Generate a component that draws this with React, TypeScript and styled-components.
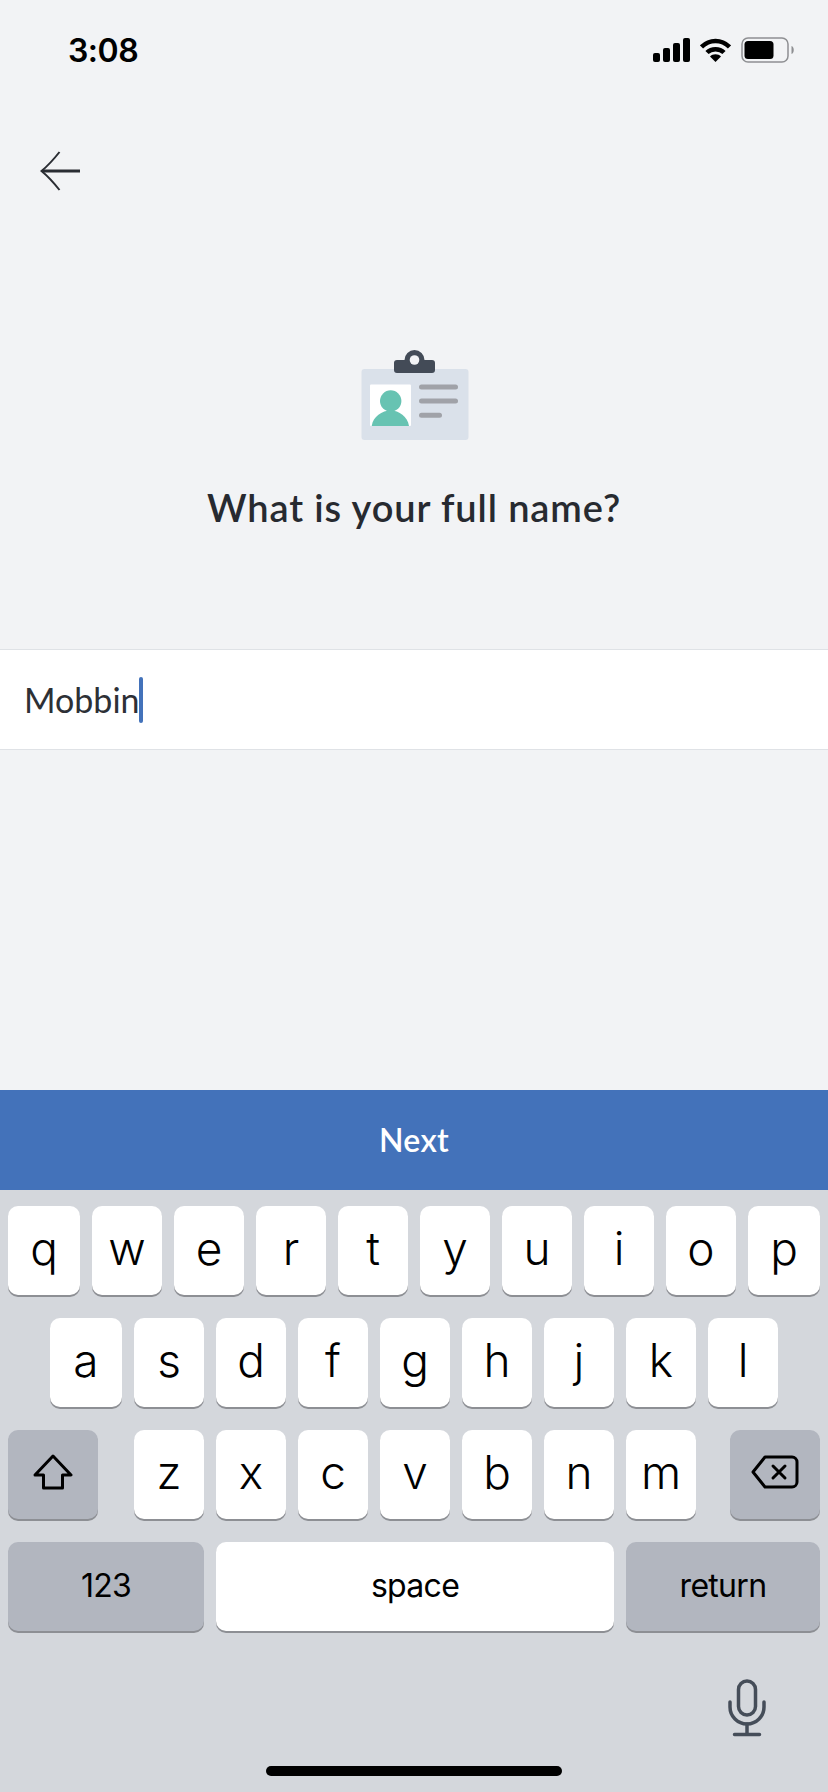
import * as React from 'react';
import styled, { createGlobalStyle } from 'styled-components';

const GlobalStyle = createGlobalStyle`
    html, body {
        margin: 0;
        padding: 0;
        background: #f2f3f5;
    }
`;

const Screen = styled.div`
    width: 828px;
    height: 1792px;
    display: flex;
    flex-direction: column;
    overflow: hidden;
    background: #f2f3f5;
    font-family: "Lato", "Liberation Sans", sans-serif;
    color: #272a30;
`;

const StatusBar = styled.div`
    height: 100px;
    flex: none;
    padding: 0 33px 0 68px;
    box-sizing: border-box;
    display: flex;
    align-items: center;
    justify-content: space-between;
`;

const Clock = styled.span`
    font-family: "Inter", "Liberation Sans", sans-serif;
    font-size: 32px;
    font-weight: 600;
    color: #000;
    letter-spacing: -0.5px;
`;

const StatusIcons = styled.div`
    display: flex;
    align-items: center;
    gap: 10px;
`;

const BackRow = styled.div`
    height: 142px;
    flex: none;
    padding-left: 40px;
    display: flex;
    align-items: center;
`;

const Prompt = styled.div`
    flex: none;
    padding-top: 108px;
    display: flex;
    flex-direction: column;
    align-items: center;
`;

const BadgeSlot = styled.div`
    flex: none;
    height: 91px;
    padding-left: 1px;
`;

const Title = styled.h1`
    margin: 43px 0 0;
    font-size: 38px;
    line-height: 46px;
    font-weight: 600;
    letter-spacing: 0.9px;
`;

const InputRow = styled.div`
    height: 101px;
    margin-top: 119px;
    flex: none;
    box-sizing: border-box;
    padding-left: 24px;
    display: flex;
    align-items: center;
    background: #fff;
    border-top: 1px solid #dfe2e6;
    border-bottom: 1px solid #dfe2e6;
`;

const InputText = styled.span`
    font-size: 34px;
    color: #2d3036;
`;

const Caret = styled.span`
    width: 4px;
    height: 46px;
    margin-left: -1px;
    border-radius: 2px;
    background: #4372ba;
`;

const Spacer = styled.div`
    flex: 1;
`;

const NextBar = styled.div`
    height: 100px;
    flex: none;
    padding-bottom: 2px;
    box-sizing: border-box;
    display: flex;
    align-items: center;
    justify-content: center;
    background: #4372ba;
    color: #fff;
    font-size: 32px;
    font-weight: 600;
    letter-spacing: 0.3px;
`;

const Keyboard = styled.div`
    height: 602px;
    flex: none;
    box-sizing: border-box;
    padding-top: 16px;
    position: relative;
    background: #d4d7dc;
    font-family: "Inter", "Liberation Sans", sans-serif;
    color: #000;
`;

const KeyRow = styled.div<{ $inset?: number }>`
    display: flex;
    gap: 12px;
    padding: 0 ${p => p.$inset ?? 8}px;
    margin-bottom: 23px;
`;

const Key = styled.div<{ $dark?: boolean; $width?: number; $small?: boolean; $before?: number; $after?: number }>`
    height: 89px;
    box-sizing: border-box;
    display: flex;
    align-items: center;
    justify-content: center;
    flex: ${p => (p.$width ? `0 0 ${p.$width}px` : '1 1 0')};
    margin-left: ${p => p.$before ?? 0}px;
    margin-right: ${p => p.$after ?? 0}px;
    border-radius: 10px;
    background: ${p => (p.$dark ? '#b2b6bf' : '#fff')};
    box-shadow: 0 2px 0 #8d8f94;
    font-size: ${p => (p.$small ? '32px' : '46px')};
    font-weight: ${p => (p.$small ? 400 : 300)};
    letter-spacing: ${p => (p.$small ? '-0.7px' : '0')};
    padding-bottom: ${p => (p.$small ? '2px' : '6px')};
`;

const MicSlot = styled.div`
    position: absolute;
    right: 62px;
    top: 489px;
`;

const HomeBar = styled.div`
    position: absolute;
    left: 266px;
    bottom: 16px;
    width: 296px;
    height: 10px;
    border-radius: 5px;
    background: #000;
`;

const SignalIcon = () => (
    <svg width="37" height="24" viewBox="0 0 37 24" fill="#000">
        <rect x="0" y="15" width="7" height="9" rx="2" />
        <rect x="10" y="10" width="7" height="14" rx="2" />
        <rect x="20" y="5" width="7" height="19" rx="2" />
        <rect x="30" y="0" width="7" height="24" rx="2" />
    </svg>
);

const WifiIcon = () => (
    <svg width="31" height="25" viewBox="0 0 31 25" fill="none" stroke="#000" strokeWidth="4.500">
        <path d="M1.500 9 C9.500 1 21.500 1 29.500 9" />
        <path d="M7 14.500 C11.500 10 19.500 10 24 14.500" />
        <path d="M15.500 24 L10 18.500 C12.500 15.500 18.500 15.500 21 18.500 Z" fill="#000" stroke="none" />
    </svg>
);

const BatteryIcon = () => (
    <svg width="54" height="26" viewBox="0 0 54 26">
        <rect x="1" y="1" width="46" height="24" rx="6" fill="none" stroke="#8e8f92" strokeWidth="1.500" />
        <rect x="3.500" y="4" width="29" height="18" rx="3.500" fill="#000" />
        <path d="M50.500 9 C53.500 10 53.500 16 50.500 17 Z" fill="#8e8f92" />
    </svg>
);

const BackIcon = () => (
    <svg width="41" height="40" viewBox="0 0 41 40" fill="none" stroke="#2a2d33" strokeWidth="2">
        <path d="M2 20 H40" strokeWidth="3" />
        <path d="M19.500 1 Q10 13 1.500 20 Q10 27 19.500 39" />
    </svg>
);

const BadgeIcon = () => (
    <svg width="108" height="91" viewBox="0 0 108 91">
        <rect x="0.500" y="19" width="107" height="71" rx="3" fill="#dae1ea" />
        <path
            d="M36 23 a3 3 0 0 1 -3 -3 v-7 a3 3 0 0 1 3 -3 h7.500 a10 10 0 0 1 20 0 h7.500 a3 3 0 0 1 3 3 v7 a3 3 0 0 1 -3 3 z"
            fill="#434b57"
        />
        <circle cx="53.500" cy="10" r="4.800" fill="#f2f3f5" />
        <rect x="9" y="34.500" width="41" height="41.500" rx="1" fill="#fff" />
        <circle cx="29.700" cy="51" r="10.700" fill="#67c3b2" />
        <path d="M10.700 76 C12 66.500 21 60.500 29.700 60.500 C38 60.500 46.500 66.500 48 76 Z" fill="#67c3b2" />
        <rect x="58" y="34.500" width="39" height="5" rx="2.500" fill="#a0a2a8" />
        <rect x="58" y="48.500" width="39" height="5" rx="2.500" fill="#a0a2a8" />
        <rect x="58" y="62.700" width="23" height="5" rx="2.500" fill="#a0a2a8" />
    </svg>
);

const ShiftIcon = () => (
    <svg width="40" height="36" viewBox="0 0 40 36" fill="none" stroke="#000" strokeWidth="3" strokeLinejoin="round">
        <path d="M20 2 L38 21 H29.500 V34 H10.500 V21 H2 Z" />
    </svg>
);

const DeleteIcon = () => (
    <svg width="48" height="34" viewBox="0 0 48 34" fill="none" stroke="#000" strokeWidth="3" strokeLinejoin="round" strokeLinecap="round">
        <path d="M14 2 H41 a5 5 0 0 1 5 5 V27 a5 5 0 0 1 -5 5 H14 L2 17 Z" />
        <path d="M22 11 L34 23 M34 11 L22 23" />
    </svg>
);

const MicIcon = () => (
    <svg width="38" height="58" viewBox="0 0 38 58" fill="none" stroke="#454d59" strokeWidth="3.500" strokeLinecap="round">
        <rect x="10.500" y="2" width="17" height="34" rx="8.500" />
        <path d="M2 23 V28 a17 17 0 0 0 34 0 V23" />
        <path d="M19 45 V55 M6.500 55.500 H31.500" />
    </svg>
);

const TOP_ROW = ['q', 'w', 'e', 'r', 't', 'y', 'u', 'i', 'o', 'p'];
const MIDDLE_ROW = ['a', 's', 'd', 'f', 'g', 'h', 'j', 'k', 'l'];
const BOTTOM_ROW = ['z', 'x', 'c', 'v', 'b', 'n', 'm'];

const App = () => {
    return (
        <Screen>
            <GlobalStyle />
            <StatusBar>
                <Clock>3:08</Clock>
                <StatusIcons>
                    <SignalIcon />
                    <WifiIcon />
                    <BatteryIcon />
                </StatusIcons>
            </StatusBar>
            <BackRow>
                <BackIcon />
            </BackRow>
            <Prompt>
                <BadgeSlot>
                    <BadgeIcon />
                </BadgeSlot>
                <Title>What is your full name?</Title>
            </Prompt>
            <InputRow>
                <InputText>Mobbin</InputText>
                <Caret />
            </InputRow>
            <Spacer />
            <NextBar>Next</NextBar>
            <Keyboard>
                <KeyRow>
                    {TOP_ROW.map((k, i) => (
                        <Key key={k} $width={i === 0 || i === 9 ? 72 : 70}>{k}</Key>
                    ))}
                </KeyRow>
                <KeyRow $inset={50}>
                    {MIDDLE_ROW.map((k, i) => (
                        <Key key={k} $width={i === 0 ? 72 : 70}>{k}</Key>
                    ))}
                </KeyRow>
                <KeyRow>
                    <Key $dark $width={90} $after={24}><ShiftIcon /></Key>
                    {BOTTOM_ROW.map(k => <Key key={k} $width={70}>{k}</Key>)}
                    <Key $dark $width={90} $before={22}><DeleteIcon /></Key>
                </KeyRow>
                <KeyRow>
                    <Key $dark $small $width={196}>123</Key>
                    <Key $small>space</Key>
                    <Key $dark $small $width={194}>return</Key>
                </KeyRow>
                <MicSlot>
                    <MicIcon />
                </MicSlot>
                <HomeBar />
            </Keyboard>
        </Screen>
    );
};

export default App;
